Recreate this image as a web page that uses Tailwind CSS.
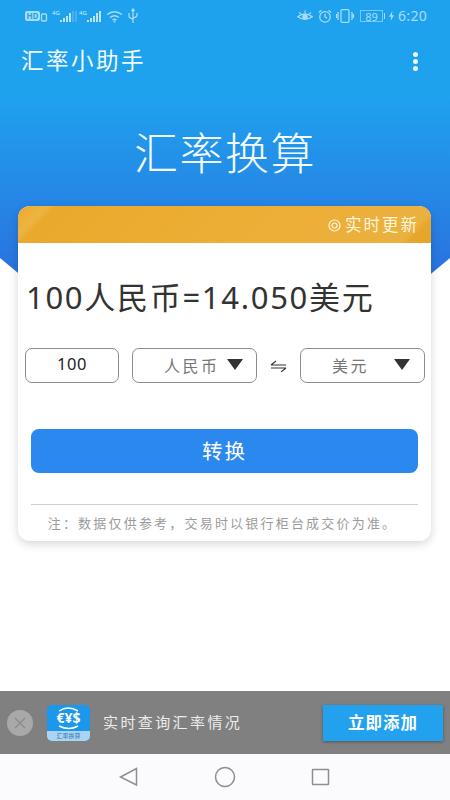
<!DOCTYPE html>
<html lang="zh">
<head>
<meta charset="utf-8">
<script src="https://cdn.jsdelivr.net/npm/@tailwindcss/browser@4"></script>
</head>
<body class="m-0">
<div class="relative w-[450px] h-[800px] overflow-hidden bg-white flex flex-col font-['Noto_Sans','Noto_Sans_CJK_SC',sans-serif]">
  <div class="absolute left-0 top-0 w-[450px] h-[445px] bg-[linear-gradient(180deg,#1fa2ee_0px,#1fa2ee_95px,#2a72df_275px)] [clip-path:polygon(0_0,100%_0,100%_258px,50%_445px,0_258px)]"></div>

  <!-- status bar -->
  <div class="relative h-[32px] flex items-center justify-between pl-[25px] pr-[23px] text-[#a8dcfa] shrink-0">
    <svg width="115" height="16" viewBox="0 0 115 16" fill="none" stroke="#a8dcfa">
      <rect x="0" y="3" width="15" height="10" rx="2" fill="#a8dcfa" stroke="none"/>
      <text x="7.500" y="11" text-anchor="middle" font-size="8" font-weight="700" fill="#1fa2ee" stroke="none">HD</text>
      <rect x="16.500" y="6" width="5" height="7" rx="1" stroke-width="1.300"/>
      <text x="27" y="7" font-size="6" fill="#cdeafc" stroke="none">4G</text>
      <path d="M36 14V12M39 14V10M42 14V8M45 14V5" stroke-width="1.600" stroke="#e3f4fe"/>
      <path d="M48 14V3M51 14V3" stroke-width="1" stroke="#6cc0f2"/>
      <text x="54" y="7" font-size="6" fill="#cdeafc" stroke="none">4G</text>
      <path d="M63 14V12M66 14V10M69 14V8M72 14V5M75 14V3" stroke-width="1.700" stroke="#d6effd"/>
      <path d="M82 6.500q7.500-5.500 15 0M85 9.500q4.500-3.500 9 0M87.500 12q2-1.500 4 0" stroke-width="1.300"/>
      <circle cx="89.500" cy="13.500" r="1" fill="#a8dcfa" stroke="none"/>
      <path d="M108 1v14M104 5v3q0 2 4 3M112 5v2q0 2-4 3M106.500 3L108 1l1.500 2" stroke-width="1.300"/>
    </svg>
    <div class="flex items-center">
      <svg width="16" height="14" viewBox="0 0 22 18" fill="none" stroke="#a8dcfa" stroke-width="1.700">
        <path d="M1 10q10-8 20 0q-10 7-20 0Z"/><circle cx="11" cy="10" r="3" fill="#a8dcfa"/><path d="M3 4l2 2.500M11 1.500v3M19 4l-2 2.500"/>
      </svg>
      <svg class="ml-[5px]" width="14" height="14" viewBox="0 0 16 16" fill="none" stroke="#a8dcfa" stroke-width="1.400">
        <circle cx="8" cy="9" r="6"/><path d="M8 5.500V9l2.500 1.500M1 4l3-2.500M15 4l-3-2.500"/>
      </svg>
      <svg class="ml-[4px]" width="18" height="14" viewBox="0 0 18 14" fill="none" stroke="#a8dcfa" stroke-width="1.300">
        <rect x="5" y="0.700" width="8" height="12.600" rx="1"/><path d="M2 3v8M16 3v8M0.500 5v4M17.500 5v4"/>
      </svg>
      <div class="ml-[6px] w-[23px] h-[12px] border border-[#7cc8f5] flex items-center justify-center text-[11px] leading-none text-[#a8dcfa]">89</div>
      <div class="ml-[1px] w-[1px] h-[6px] bg-[#a8dcfa]"></div>
      <svg class="ml-[4px]" width="5" height="10" viewBox="0 0 6 12"><path d="M4 0L0 7h2.500L2 12l4-7H3.500Z" fill="#a8dcfa"/></svg>
      <span class="ml-[4px] text-[14px] leading-none tracking-[0.300px]">6:20</span>
    </div>
  </div>

  <!-- app bar -->
  <div class="relative h-[58px] flex items-center justify-between pl-[21px] pr-[32px] shrink-0">
    <span class="text-[22.500px] leading-none tracking-[2.500px] text-[#f3fbff]">汇率小助手</span>
    <div class="flex flex-col gap-[2px]">
      <i class="block w-[5px] h-[5px] rounded-full bg-[#eaf7ff]"></i>
      <i class="block w-[5px] h-[5px] rounded-full bg-[#eaf7ff]"></i>
      <i class="block w-[5px] h-[5px] rounded-full bg-[#eaf7ff]"></i>
    </div>
  </div>

  <!-- hero title -->
  <div class="relative h-[116px] pt-[38px] flex justify-center items-start shrink-0">
    <span class="text-[44px] leading-[50px] tracking-[1.500px] font-light text-[#f3fbff]">汇率换算</span>
  </div>

  <!-- card -->
  <div class="relative mx-[18px] w-[413px] h-[335px] rounded-[12px] bg-white shadow-[0_3px_10px_rgba(0,0,0,0.16)] overflow-hidden shrink-0">
    <div class="h-[37px] flex items-center justify-end pr-[13px] pt-[1px] text-[16.500px] tracking-[2px] text-[#fff6df] bg-[linear-gradient(135deg,#e9a727_0px,#eeb544_20px,#e9a92c_28px,#ecae35_50%,#ebb13e_93%,#e6a52b_95%)]">
      <svg class="mr-[4px]" width="13" height="13" viewBox="0 0 13 13" fill="none" stroke="#fff6df"><circle cx="6.500" cy="6.500" r="5.500" stroke-width="1.200"/><circle cx="6.500" cy="6.500" r="2.500" stroke-width="1.200"/></svg>
      <span class="-mr-[1px]">实时更新</span>
    </div>
    <div class="pl-[8px] pt-[34px] text-[31px] leading-[40px] tracking-[1.700px] text-[#333333] whitespace-nowrap">100人民币=14.050美元</div>
    <div class="mt-[31px] flex items-center pl-[7px]">
      <div class="w-[94px] h-[35px] rounded-[7px] border border-[#8c8c8c] flex items-center justify-center text-[16.500px] tracking-[0.500px] leading-none text-[#222222] pb-[3px]">100</div>
      <div class="ml-[13px] w-[125px] h-[35px] rounded-[7px] border border-[#8c8c8c] flex items-center pl-[31px] text-[#777777] text-[16px] tracking-[2.500px]">
        <span>人民币</span>
        <svg class="ml-[7px] -mt-[3px]" width="16" height="11" viewBox="0 0 16 11"><path d="M0 0H16L8 11Z" fill="#333333"/></svg>
      </div>
      <svg class="ml-[13px]" width="17" height="12" viewBox="0 0 17 12" fill="none" stroke="#333333" stroke-width="1.100"><path d="M1 5h15M1 5l5-4M1 8h15M16 8l-5 4"/></svg>
      <div class="ml-[13px] w-[125px] h-[35px] rounded-[7px] border border-[#8c8c8c] flex items-center pl-[31px] text-[#777777] text-[16px] tracking-[2.500px]">
        <span>美元</span>
        <svg class="ml-[25px] -mt-[3px]" width="16" height="11" viewBox="0 0 16 11"><path d="M0 0H16L8 11Z" fill="#333333"/></svg>
      </div>
    </div>
    <div class="mt-[46px] mx-[13px] h-[44px] rounded-[8px] bg-[#2b88ee] flex items-center justify-center text-[20.500px] tracking-[2px] text-white pt-[1px]">转换</div>
    <div class="mt-[31px] mx-[13px] border-t border-[#cfcfcf]"></div>
    <div class="mt-[9px] pr-[4px] text-center text-[13px] leading-[18px] tracking-[2.200px] text-[#9b9b9b] whitespace-nowrap">注：数据仅供参考，交易时以银行柜台成交价为准。</div>
  </div>

  <div class="flex-1"></div>

  <!-- ad bar -->
  <div class="relative h-[63px] bg-[#808080] flex items-center shrink-0">
    <div class="ml-[7px] w-[26px] h-[26px] rounded-full bg-[#a9a9a9] flex items-center justify-center">
      <svg width="12" height="12" viewBox="0 0 12 12" fill="none" stroke="#8a8a8a" stroke-width="1.300"><path d="M1 1l10 10M11 1L1 11"/></svg>
    </div>
    <div class="ml-[14px] w-[43px] h-[36px] rounded-[5px] bg-[#1b97ec] overflow-hidden flex flex-col">
      <svg class="block" width="43" height="26" viewBox="0 0 43 26" fill="none" stroke="#ffffff">
        <path d="M12 6q9-6 19 0M31 21q-9 5-19 0" stroke-width="1.500"/>
        <text x="21.500" y="18" text-anchor="middle" font-size="14" font-weight="700" fill="#ffffff" stroke="none">€¥$</text>
      </svg>
      <div class="flex-1 bg-[#a9d5f3] flex items-center justify-center text-[6px] leading-none text-[#3a78b0]">汇率换算</div>
    </div>
    <span class="ml-[13px] text-[15px] tracking-[2.400px] text-[#ececec]">实时查询汇率情况</span>
    <div class="absolute left-[323px] top-[14px] w-[120px] h-[36px] bg-[#22a2ee] shadow-[0_1px_3px_rgba(0,0,0,0.35)] flex items-center justify-center text-[16.500px] font-bold tracking-[1px] text-white">立即添加</div>
  </div>

  <!-- nav bar -->
  <div class="h-[46px] bg-[#fbfbfe] relative shrink-0">
    <svg class="absolute left-0 top-0" width="450" height="46" viewBox="0 0 450 46" fill="none" stroke="#8e8e8e" stroke-width="1.500">
      <path d="M136.500 14.500V31L120.500 23Z"/>
      <circle cx="225" cy="23" r="9.500"/>
      <rect x="312.500" y="15.500" width="16" height="15" rx="0.500"/>
    </svg>
  </div>
</div>
</body>
</html>
